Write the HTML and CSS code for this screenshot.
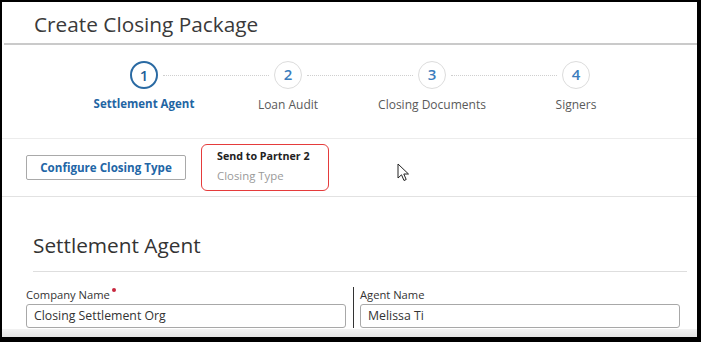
FILE: index.html
```html
<!DOCTYPE html>
<html>
<head>
    <meta charset="UTF-8">
    <title>Create Closing Package</title>
    <link rel="stylesheet" href="styles.css">
</head>
<body>
<div class="panel">
    <div class="page-title">Create Closing Package</div>

    <div class="steps">
        <div class="step-track">
            <span class="step-num active">1</span>
            <span class="step-line"></span>
            <span class="step-num">2</span>
            <span class="step-line"></span>
            <span class="step-num">3</span>
            <span class="step-line"></span>
            <span class="step-num">4</span>
        </div>
        <div class="step-labels">
            <span class="step-label active">Settlement Agent</span>
            <span class="step-label">Loan Audit</span>
            <span class="step-label">Closing Documents</span>
            <span class="step-label">Signers</span>
        </div>
    </div>

    <div class="actions">
        <div class="btn">Configure Closing Type</div>
        <div class="closing-type">
            <div class="ct-value">Send to Partner 2</div>
            <div class="ct-label">Closing Type</div>
        </div>
        <!-- mouse pointer from the recording -->
        <svg class="cursor" width="13" height="20" viewBox="0 0 13 20">
            <path d="M1 1 L1 15 L4.5 11.8 L7 17.5 L9.2 16.5 L6.8 11 L11.5 11 Z" fill="#fff" stroke="#222" stroke-width="1" stroke-linejoin="round"/>
        </svg>
    </div>

    <div class="section">
        <h2 class="section-title">Settlement Agent</h2>
        <div class="fields">
            <div class="field">
                <label>Company Name <span class="req"></span></label>
                <div class="inp">Closing Settlement Org</div>
            </div>
            <div class="field second">
                <label>Agent Name</label>
                <div class="inp">Melissa Ti</div>
            </div>
        </div>
    </div>
    <div class="fade"></div>
</div>
</body>
</html>
```

FILE: styles.css
```css
html, body {
    margin: 0;
    height: 100%;
    background: #000;
}

body {
    padding: 2px 4px 5px 2px;
    box-sizing: border-box;
    font-family: "Open Sans", "Liberation Sans", sans-serif;
    color: #333;
}

.panel {
    position: relative;
    height: 100%;
    background: #fff;
    overflow: hidden;
}

.page-title {
    height: 41px;
    line-height: 45px;
    font-size: 20.8px;
    color: #3a3a3a;
    border-bottom: 2px solid #cacaca;
    margin: 0 0 0 2px;
    padding-left: 30px;
}

.steps {
    height: 93px;
    border-bottom: 1px solid #ececec;
}

.step-track {
    display: flex;
    align-items: center;
    padding: 16px 0 0 128px;
}

.step-num {
    box-sizing: border-box;
    width: 28px;
    height: 28px;
    border-radius: 50%;
    border: 1.5px solid #dcdcdc;
    text-align: center;
    line-height: 25px;
    font-size: 15px;
    font-weight: 600;
    color: #3b7dbd;
}

.step-num.active {
    border: 2px solid #2a6aa3;
    color: #1f5f99;
    line-height: 24px;
}

.step-line {
    width: 106px;
    margin: 0 5px;
    border-top: 1px dotted #cfcfcf;
}

.step-labels {
    display: grid;
    grid-template-columns: repeat(4, 144px);
    padding: 7px 0 0 70px;
}

.step-label {
    text-align: center;
    font-size: 12px;
    color: #5a5a5a;
}

.step-label.active {
    font-size: 11.5px;
    font-weight: 700;
    color: #1f65a3;
}

.actions {
    position: relative;
    display: flex;
    align-items: center;
    height: 57px;
    padding-left: 24px;
    border-bottom: 1px solid #e2e2e2;
}

.btn {
    box-sizing: border-box;
    width: 160px;
    height: 25px;
    line-height: 23px;
    border: 1px solid #a9a9a9;
    border-radius: 2px;
    text-align: center;
    font-size: 11.6px;
    font-weight: 700;
    color: #2266a6;
}

.closing-type {
    box-sizing: border-box;
    width: 128px;
    height: 47px;
    margin-left: 15px;
    padding: 4px 0 0 15px;
    border: 1.5px solid #e53b3b;
    border-radius: 6px;
}

.ct-value {
    font-size: 10.7px;
    font-weight: 700;
    color: #222;
}

.ct-label {
    margin-top: 5px;
    font-size: 11.4px;
    color: #9a9a9a;
}

.cursor {
    position: absolute;
    left: 395px;
    top: 24px;
}

.section {
    padding: 0 10px 0 24px;
}

.section-title {
    margin: 0 0 0 7px;
    height: 75px;
    box-sizing: border-box;
    padding-top: 34px;
    font-size: 20.8px;
    font-weight: 400;
    color: #333;
    border-bottom: 1px solid #dedede;
}

.fields {
    display: flex;
    padding-top: 15px;
}

.field {
    width: 320px;
}

.field.second {
    margin-left: 7px;
    padding-left: 6px;
    border-left: 1px solid #333;
}

label {
    display: block;
    font-size: 11.2px;
    color: #333;
    margin-bottom: 2px;
}

.req {
    display: inline-block;
    width: 4px;
    height: 4px;
    border-radius: 50%;
    background: #c8283f;
    vertical-align: top;
    margin: 1px 0 0 -1px;
}

.inp {
    box-sizing: border-box;
    height: 24px;
    line-height: 22px;
    padding-left: 7px;
    border: 1px solid #a8a8a8;
    border-radius: 3px;
    font-size: 12.3px;
    color: #333;
    background: #fff;
}

.fade {
    position: absolute;
    left: 0;
    right: 0;
    bottom: 0;
    height: 8px;
    background: linear-gradient(#f2f2f2, #e3e3e3);
}
```
